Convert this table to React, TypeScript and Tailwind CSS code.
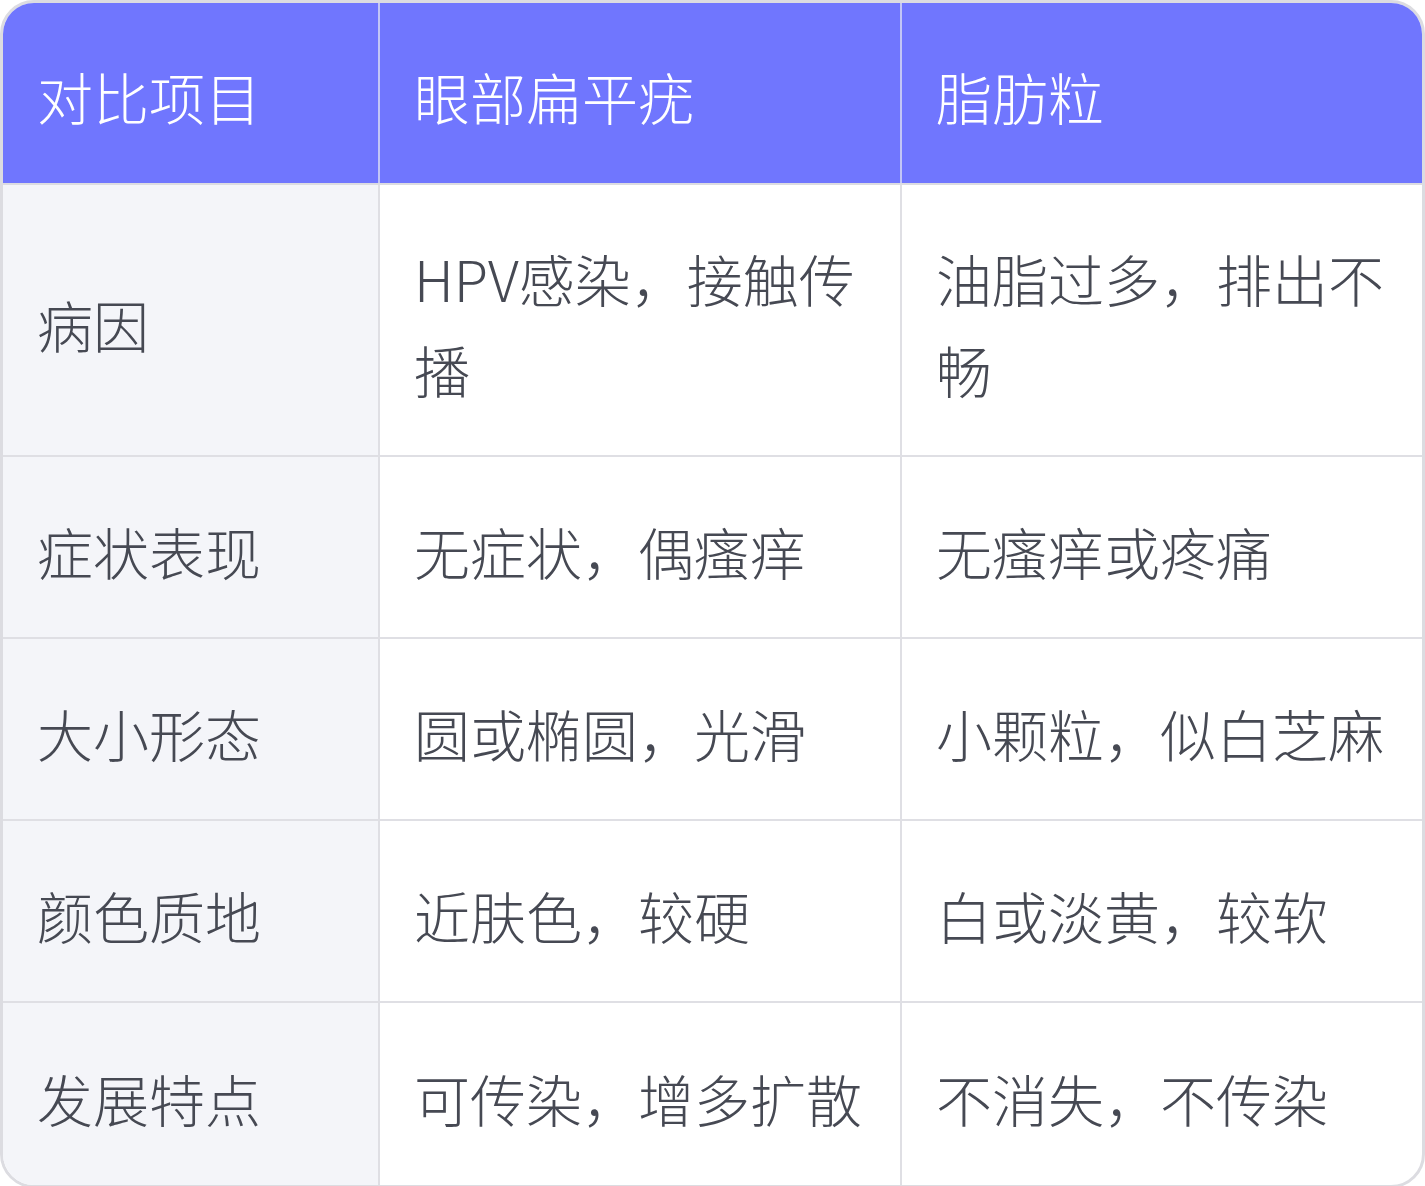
const header = ["对比项目", "眼部扁平疣", "脂肪粒"];

const rows: { label: string; a: string; b: string; tall?: boolean }[] = [
  { label: "病因", a: "HPV感染，接触传播", b: "油脂过多，排出不畅", tall: true },
  { label: "症状表现", a: "无症状，偶瘙痒", b: "无瘙痒或疼痛" },
  { label: "大小形态", a: "圆或椭圆，光滑", b: "小颗粒，似白芝麻" },
  { label: "颜色质地", a: "近肤色，较硬", b: "白或淡黄，较软" },
  { label: "发展特点", a: "可传染，增多扩散", b: "不消失，不传染" }
];

const font = { fontFamily: '"Noto Sans CJK SC", "Noto Sans", sans-serif' };

export default function App() {
  return (
    <div className="h-[1186px] w-[1425px] bg-white" style={font}>
      <div className="overflow-hidden rounded-[34px] border-[3px] border-[#dcdce1] text-[56px] font-light leading-[91px]">
        <div className="grid h-[182px] grid-cols-[377px_522px_520px] border-b-2 border-[#dcdce1] bg-[#7076fe] text-white">
          {header.map((h, i) => (
            <div
              className={`flex items-center px-[34px] pt-[4px] ${i < 2 ? "border-r-2 border-[#c3c6f6]" : ""}`}
              key={h}
            >
              {h}
            </div>
          ))}
        </div>
        {rows.map((r, idx) => (
          <div
            className={`grid grid-cols-[377px_522px_520px] text-[#464953] ${r.tall ? "h-[272px]" : "h-[182px]"} ${idx < rows.length - 1 ? "border-b-2 border-[#dfdfe4]" : "h-[180px]"}`}
            key={r.label}
          >
            <div className="flex items-center border-r-2 border-[#dfdfe4] bg-[#f4f5f9] px-[34px] pt-[6px]">{r.label}</div>
            <div className="flex items-center border-r-2 border-[#dfdfe4] px-[34px] pt-[6px]">{r.a}</div>
            <div className="flex items-center px-[34px] pt-[6px]">{r.b}</div>
          </div>
        ))}
      </div>
    </div>
  );
}
